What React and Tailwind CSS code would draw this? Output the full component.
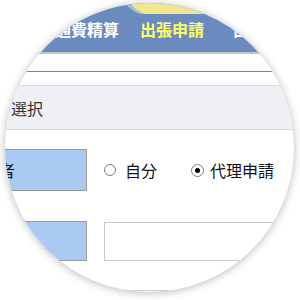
export default function App() {
  const jp = { fontFamily: '"Noto Sans CJK JP", "Noto Sans", sans-serif' };

  return (
    <div className="w-[300px] h-[300px] bg-white overflow-hidden" style={jp}>
      {/* magnifier lens */}
      <div className="ml-[5px] mt-[3px] w-[289px] h-[289px] rounded-full overflow-hidden bg-white shadow-[0_1px_8px_rgba(0,0,0,0.28)]">
        <div className="-ml-[5px] -mt-[3px] w-[300px]">
          {/* header bar */}
          <div className="relative h-[52px] bg-[#6a8bbf] border-b-2 border-[#c4c4c4] box-content">
            <svg className="absolute left-0 top-0" width="300" height="16" viewBox="0 0 300 16">
              <path d="M124,0 Q128,10 140,14 L240,14 L240,0 Z" fill="#9fb8dc" />
              <path d="M129,0 Q133,10 145,14 L240,14 L240,0 Z" fill="#f1e68e" />
              <path d="M138,0 L200,0 Q185,5 150,4 Q142,3 138,0 Z" fill="#b6dff0" />
            </svg>
            <div className="flex items-center h-full pt-[6px] text-[16px] font-bold leading-none whitespace-nowrap">
              <span className="ml-[39px] shrink-0 text-white">交通費精算</span>
              <span className="ml-[21px] shrink-0 text-[#ffff66]">出張申請</span>
              <span className="ml-[29px] shrink-0 text-white">出張精算</span>
            </div>
          </div>

          {/* tab / blank strip */}
          <div className="h-[17px] bg-white" />
          <div className="h-px bg-[#5b8ad6]" />
          <div className="h-[13px] bg-white" />
          <div className="h-px bg-[#d8d8d8]" />

          {/* section title */}
          <div className="h-[43px] bg-[#efeff5] flex items-center border-b border-[#d6d6de] box-content">
            <span className="-ml-[69px] shrink-0 whitespace-nowrap text-[16px] leading-none text-[#333]">申請区分の選択</span>
          </div>

          {/* rows */}
          <div className="pt-[19px]">
            <div className="flex items-center h-[42px]">
              <div className="shrink-0 w-[87px] h-[42px] bg-[#a9c8f2] border border-[#9a9a9a] flex items-center justify-end pr-[71px]">
                <span className="text-[16px] leading-none text-[#111] whitespace-nowrap">申請者</span>
              </div>
              <div className="shrink-0 ml-[17px] w-[12px] h-[12px] rounded-full border border-[#7c7c7c] bg-white" />
              <span className="shrink-0 ml-[9px] text-[16px] leading-none text-[#111]">自分</span>
              <div className="shrink-0 ml-[34px] w-[13px] h-[13px] rounded-full border border-[#7c7c7c] bg-white flex items-center justify-center">
                <div className="w-[5px] h-[5px] rounded-full bg-black" />
              </div>
              <span className="shrink-0 ml-[6px] text-[16px] leading-none text-[#111] whitespace-nowrap">代理申請</span>
            </div>

            <div className="flex items-center h-[40px] mt-[30px]">
              <div className="shrink-0 w-[87px] h-[40px] bg-[#a9c8f2] border border-[#9a9a9a]" />
              <div className="shrink-0 ml-[17px] w-[220px] h-[39px] bg-white border border-[#c8c8c8]" />
            </div>

            <div className="mt-[29px] h-px bg-[#cfcfcf]" />
          </div>
        </div>
      </div>
    </div>
  );
}
